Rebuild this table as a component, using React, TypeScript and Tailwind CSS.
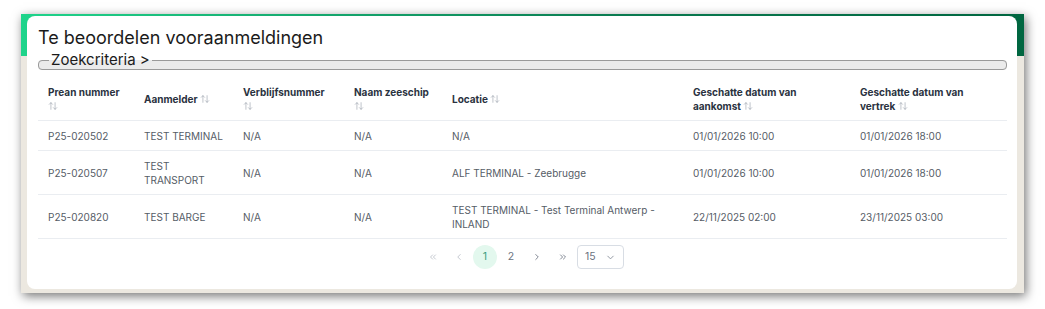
import { ArrowDownWideNarrow, ArrowUpDown, ChevronDown, ChevronLeft, ChevronRight, ChevronsLeft, ChevronsRight } from "lucide-react";

type Row = {
  prean: string;
  aanmelder: string;
  verblijf: string;
  zeeschip: string;
  locatie: string;
  aankomst: string;
  vertrek: string;
};

const ROWS: Row[] = [
  {
    prean: "P25-020502",
    aanmelder: "TEST TERMINAL",
    verblijf: "N/A",
    zeeschip: "N/A",
    locatie: "N/A",
    aankomst: "01/01/2026 10:00",
    vertrek: "01/01/2026 18:00",
  },
  {
    prean: "P25-020507",
    aanmelder: "TEST TRANSPORT",
    verblijf: "N/A",
    zeeschip: "N/A",
    locatie: "ALF TERMINAL - Zeebrugge",
    aankomst: "01/01/2026 10:00",
    vertrek: "01/01/2026 18:00",
  },
  {
    prean: "P25-020820",
    aanmelder: "TEST BARGE",
    verblijf: "N/A",
    zeeschip: "N/A",
    locatie: "TEST TERMINAL - Test Terminal Antwerp - INLAND",
    aankomst: "22/11/2025 02:00",
    vertrek: "23/11/2025 03:00",
  },
];

function Sort({ active }: { active?: boolean }) {
  return active ? (
    <ArrowDownWideNarrow size={10} strokeWidth={1.5} className="inline-block align-[-1px] text-[#9aa1ab]" />
  ) : (
    <ArrowUpDown size={10} strokeWidth={1.5} className="inline-block align-[-1px] text-[#9aa1ab]" />
  );
}

function Header({ label, active, w }: { label: string; active?: boolean; w?: string }) {
  return (
    <th className="px-[10px] py-[7px] text-left align-middle font-bold text-[#2a3240]">
      <div className={w}>
        {label} <Sort active={active} />
      </div>
    </th>
  );
}

export default function App() {
  return (
    <div className="h-[309px] w-[1045px] bg-white pl-[21px] pt-[14px] font-['Inter',sans-serif]">
      <div className="h-[279px] w-[1003px] bg-[#ece8e0] bg-[linear-gradient(90deg,#1fd48b,#0a7a50_60%,#006640)] bg-[length:100%_42px] bg-no-repeat pb-[4px] pl-[6px] pr-[7px] pt-[2px] shadow-[2px_3px_10px_rgba(0,0,0,0.55)]">
        <div className="flex h-full flex-col rounded-[8px] bg-white pl-[11px] pr-[10px] pt-[10px]">
          <h1 className="text-[18px] leading-[24px] text-[#1b1b1b]">Te beoordelen vooraanmeldingen</h1>

          <fieldset className="mt-[1px] rounded-[4px] border border-[#9a9a9a] bg-[#ebebeb] px-[10px]">
            <legend className="px-[2px] text-[15px] leading-[18px] text-[#1b1b1b]">Zoekcriteria &gt;</legend>
          </fieldset>

          <table className="mt-[8px] w-full table-fixed border-collapse text-[10px] leading-[14px]">
            <colgroup>
              <col className="w-[96px]" />
              <col className="w-[99px]" />
              <col className="w-[111px]" />
              <col className="w-[98px]" />
              <col className="w-[241px]" />
              <col className="w-[167px]" />
              <col />
            </colgroup>
            <thead>
              <tr className="border-b-[1.5px] border-[#eaedf1]">
                <Header label="Prean nummer" w="w-[72px]" />
                <Header label="Aanmelder" />
                <Header label="Verblijfsnummer" w="w-[84px]" />
                <Header label="Naam zeeschip" w="w-[76px]" />
                <Header label="Locatie" />
                <Header label="Geschatte datum van aankomst" w="w-[112px]" />
                <Header label="Geschatte datum van vertrek" w="w-[112px]" />
              </tr>
            </thead>
            <tbody className="text-[#555c66]">
              {ROWS.map((r) => (
                <tr key={r.prean} className="border-b-[1.5px] border-[#eaedf1]">
                  <td className="px-[10px] py-[7.5px]">{r.prean}</td>
                  <td className="px-[10px] py-[7.5px]">
                    <div className="w-[79px]">{r.aanmelder}</div>
                  </td>
                  <td className="px-[10px] py-[7.5px]">{r.verblijf}</td>
                  <td className="px-[10px] py-[7.5px]">{r.zeeschip}</td>
                  <td className="px-[10px] py-[7.5px]">
                    <div className="w-[212px]">{r.locatie}</div>
                  </td>
                  <td className="px-[10px] py-[7.5px]">{r.aankomst}</td>
                  <td className="px-[10px] py-[7.5px]">{r.vertrek}</td>
                </tr>
              ))}
            </tbody>
          </table>

          <div className="mt-[6px] flex items-center justify-center gap-[2px] text-[10.5px] text-[#6b7280]">
            <button className="flex h-[24px] w-[24px] items-center justify-center text-[#b9bec7]">
              <ChevronsLeft size={10} />
            </button>
            <button className="flex h-[24px] w-[24px] items-center justify-center text-[#b9bec7]">
              <ChevronLeft size={10} />
            </button>
            <button className="flex h-[24px] w-[24px] items-center justify-center rounded-full bg-[#e3f8ee] text-[#3a9c80]">
              1
            </button>
            <button className="flex h-[24px] w-[24px] items-center justify-center">2</button>
            <button className="flex h-[24px] w-[24px] items-center justify-center">
              <ChevronRight size={10} />
            </button>
            <button className="flex h-[24px] w-[24px] items-center justify-center">
              <ChevronsRight size={10} />
            </button>
            <div className="flex h-[24px] w-[47px] items-center justify-between rounded-[4px] border border-[#d8dde4] pl-[7px] pr-[7px]">
              <span>15</span>
              <ChevronDown size={11} className="text-[#8a919b]" />
            </div>
          </div>
        </div>
      </div>
    </div>
  );
}
